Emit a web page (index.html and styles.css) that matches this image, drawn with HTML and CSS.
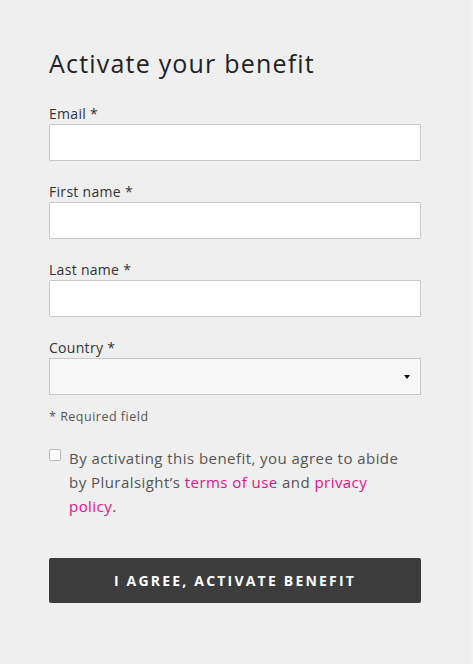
FILE: index.html
```html
<!DOCTYPE html>
<html>
<head>
<meta charset="utf-8">
<link rel="stylesheet" href="styles.css">
</head>
<body>
<div class="page">
  <form class="form">
    <h1 class="title">Activate your benefit</h1>
    <div class="field">
      <label class="label">Email *</label>
      <input class="input" type="text">
    </div>
    <div class="field">
      <label class="label">First name *</label>
      <input class="input" type="text">
    </div>
    <div class="field">
      <label class="label">Last name *</label>
      <input class="input" type="text">
    </div>
    <div class="field">
      <label class="label">Country *</label>
      <div class="select">
        <span class="caret"></span>
      </div>
    </div>
    <p class="required">* Required field</p>
    <div class="agree">
      <span class="checkbox"></span>
      <p class="agree-text">By activating this benefit, you agree to abide by Pluralsight’s <a class="link" href="#">terms of use</a> and <a class="link" href="#">privacy policy</a>.</p>
    </div>
    <button class="button" type="button">I agree, activate benefit</button>
  </form>
</div>
</body>
</html>
```
FILE: styles.css
```css
html, body {
  margin: 0;
  padding: 0;
  background: #efefef;
}
.page {
  width: 471px;
  height: 664px;
  border-right: 2px solid #f3f3f3;
  font-family: "Open Sans", "Liberation Sans", sans-serif;
  color: #333;
}
.form {
  padding: 46px 0 0 49px;
  width: 372px;
  display: flex;
  flex-direction: column;
}
.title {
  margin: 0 0 25px 0;
  font-size: 25px;
  font-weight: 400;
  line-height: 34px;
  color: #222;
  letter-spacing: 1.2px;
}
.field {
  display: flex;
  flex-direction: column;
  margin-bottom: 22px;
}
.label {
  font-size: 14px;
  line-height: 17px;
  color: #333;
  margin-bottom: 2px;
  letter-spacing: 0.3px;
}
.input {
  box-sizing: border-box;
  height: 37px;
  width: 372px;
  margin: 0;
  border: 1px solid #c8c8c8;
  background: #fff;
  border-radius: 1px;
}
.select {
  box-sizing: border-box;
  height: 37px;
  width: 372px;
  border: 1px solid #c8c8c8;
  background: #f8f8f8;
  display: flex;
  justify-content: flex-end;
  align-items: center;
  padding-right: 10px;
}
.caret {
  width: 0;
  height: 0;
  border-left: 3px solid transparent;
  border-right: 3px solid transparent;
  border-top: 4px solid #111;
}
.required {
  margin: -8px 0 21px 0;
  font-size: 12.5px;
  line-height: 16px;
  color: #555;
  letter-spacing: 0.5px;
}
.agree {
  display: flex;
  align-items: flex-start;
  gap: 8px;
  margin-bottom: 40px;
}
.checkbox {
  box-sizing: border-box;
  flex: none;
  width: 12px;
  height: 12px;
  margin-top: 3px;
  border: 1px solid #bbb;
  border-radius: 2px;
  background: #fff;
}
.agree-text {
  margin: 0;
  width: 340px;
  font-size: 15px;
  line-height: 24px;
  color: #555;
  letter-spacing: 0.45px;
}
.link {
  color: #ea0f8c;
  text-decoration: none;
}
.button {
  height: 45px;
  width: 372px;
  border: none;
  border-radius: 2px;
  background: #3c3c3c;
  color: #fff;
  font-family: "Open Sans", "Liberation Sans", sans-serif;
  font-weight: 700;
  font-size: 14px;
  text-transform: uppercase;
  letter-spacing: 2.2px;
}
```
